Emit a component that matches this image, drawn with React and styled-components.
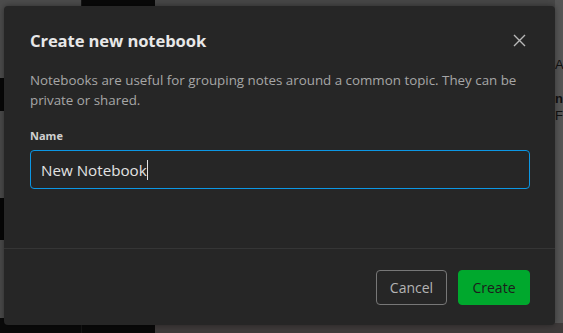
import React from "react";
import styled, { createGlobalStyle } from "styled-components";

const Global = createGlobalStyle`
  html, body { margin: 0; padding: 0; background: #0b0b0b; }
  body { font-family: "Open Sans", "Noto Sans", sans-serif; }
  * { box-sizing: border-box; }
`;

const Page = styled.div`
  position: relative;
  width: 563px;
  height: 333px;
  overflow: hidden;
  display: flex;
`;

const ThumbColumn = styled.div`
  width: 81px;
  display: flex;
  flex-direction: column;
  background: #0a0a0a;
`;

const Thumb = styled.div`
  height: ${(p) => p.$h}px;
  background: ${(p) => p.$bg};
`;

const SideColumn = styled.div`
  width: 74px;
  background: #090909;
  border-left: 1px solid #161616;
`;

const Main = styled.div`
  flex: 1;
  display: flex;
  flex-direction: column;
  background: #474747;
`;

const MainTop = styled.div`
  flex: 1;
  display: flex;
  justify-content: flex-end;
`;

const RightPane = styled.div`
  width: 8px;
  background: #555;
  color: #111;
  font-family: "Liberation Sans", sans-serif;
  font-size: 13px;
  padding-top: 56px;
  line-height: 17px;
  overflow: hidden;
  white-space: nowrap;
`;

const MainBottom = styled.div`
  height: 10px;
  background: #3e3a3a;
`;

const Dialog = styled.div`
  position: absolute;
  left: 4px;
  top: 6px;
  width: 551px;
  height: 319px;
  background: #262626;
  border-radius: 4px;
  display: flex;
  flex-direction: column;
  box-shadow: 0 0 6px rgba(0, 0, 0, 0.4);
`;

const Body = styled.div`
  flex: 1;
  padding: 20px 26px 0 26px;
  display: flex;
  flex-direction: column;
`;

const Header = styled.div`
  display: flex;
  align-items: center;
  justify-content: space-between;
  height: 28px;
`;

const Title = styled.h2`
  margin: 0;
  font-size: 16.6px;
  font-weight: 700;
  color: #e8e8e8;
  letter-spacing: -0.1px;
`;

const CloseButton = styled.button`
  width: 24px;
  height: 24px;
  margin-right: -2px;
  padding: 0;
  border: 0;
  background: transparent;
  display: flex;
  align-items: center;
  justify-content: center;
  color: #b8b8b8;
`;

const Description = styled.p`
  margin: 16px 0 0;
  font-size: 13.35px;
  line-height: 20px;
  color: #a6a6a6;
`;

const Label = styled.label`
  display: block;
  margin-top: 18px;
  font-size: 11px;
  font-weight: 700;
  color: #d0d0d0;
  line-height: 16px;
`;

const Input = styled.div`
  margin-top: 6px;
  width: 500px;
  height: 39px;
  border: 1px solid #0c97e4;
  border-radius: 4px;
  padding: 0 10px;
  display: flex;
  align-items: center;
  font-size: 15.2px;
  color: #e2e2e2;
`;

const Caret = styled.span`
  display: inline-block;
  width: 1px;
  height: 20px;
  background: #e2e2e2;
`;

const Footer = styled.div`
  height: 77px;
  border-top: 1px solid #353535;
  display: flex;
  align-items: center;
  justify-content: flex-end;
  gap: 11px;
  padding: 0 25px 0 0;
`;

const Button = styled.button`
  height: 35px;
  width: ${(p) => p.$w}px;
  border-radius: 4px;
  font-family: "Open Sans", "Noto Sans", sans-serif;
  font-size: 14px;
  padding: 0;
  border: 1px solid ${(p) => (p.$primary ? "#00a82d" : "#777")};
  background: ${(p) => (p.$primary ? "#00a82d" : "transparent")};
  color: ${(p) => (p.$primary ? "#1c1c1c" : "#b4b4b4")};
`;

export default function App() {
  return (
    <>
      <Global />
      <Page>
        <ThumbColumn>
          <Thumb $h={78} $bg="#4c4c4c" />
          <Thumb $h={33} $bg="#070707" />
          <Thumb $h={87} $bg="#4a4a4a" />
          <Thumb $h={42} $bg="#060606" />
          <Thumb $h={78} $bg="#4a4a4a" />
        </ThumbColumn>
        <SideColumn />
        <Main>
          <MainTop>
            <RightPane>
              A<br />
              <br />
              <b>n</b>
              <br />
              F
            </RightPane>
          </MainTop>
          <MainBottom />
        </Main>
        <Dialog role="dialog">
          <Body>
            <Header>
              <Title>Create new notebook</Title>
              <CloseButton aria-label="Close">
                <svg width="13" height="13" viewBox="0 0 13 13">
                  <path d="M1 1L12 12M12 1L1 12" stroke="currentColor" strokeWidth="1.4" />
                </svg>
              </CloseButton>
            </Header>
            <Description>
              Notebooks are useful for grouping notes around a common topic. They can be
              private or shared.
            </Description>
            <Label>Name</Label>
            <Input>
              New Notebook
              <Caret />
            </Input>
          </Body>
          <Footer>
            <Button $w={71}>Cancel</Button>
            <Button $w={72} $primary>
              Create
            </Button>
          </Footer>
        </Dialog>
      </Page>
    </>
  );
}
